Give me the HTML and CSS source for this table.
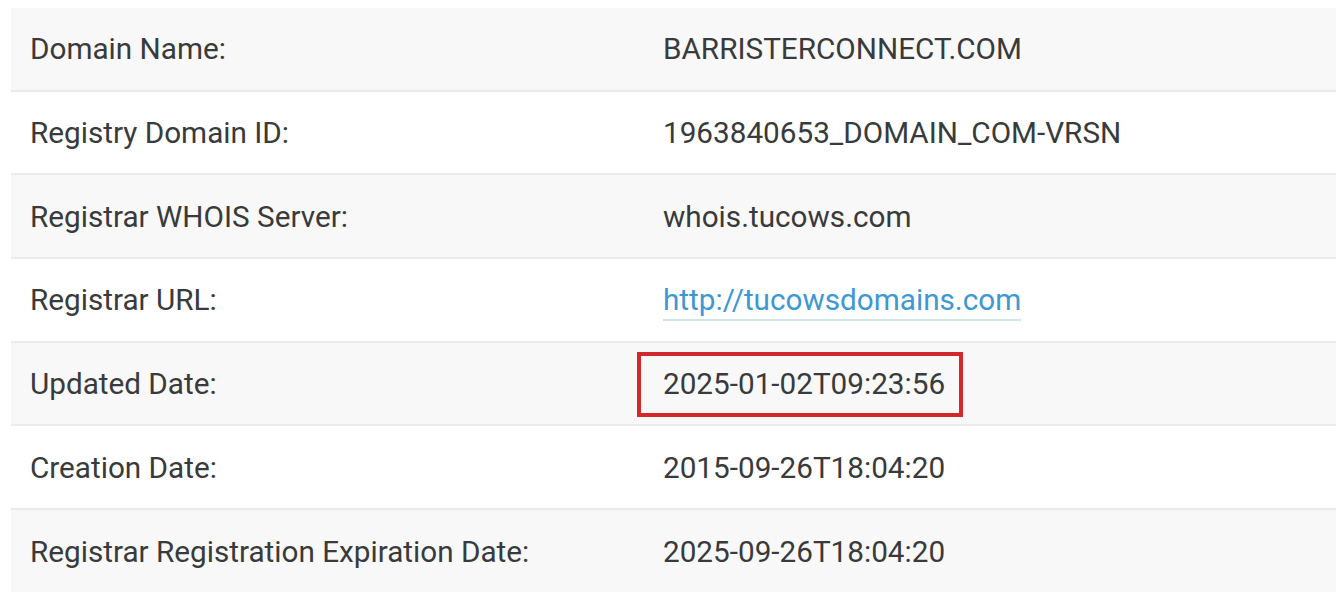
FILE: index.html
```
<!DOCTYPE html>
<html lang="en">
<head>
    <meta charset="UTF-8">
    <title>WHOIS - BARRISTERCONNECT.COM</title>
    <link rel="stylesheet" href="styles.css">
</head>
<body>

    <div class="whois">
        <div class="row">
            <div class="label">Domain Name:</div>
            <div class="value">BARRISTERCONNECT.COM</div>
        </div>
        <div class="row">
            <div class="label">Registry Domain ID:</div>
            <div class="value">1963840653_DOMAIN_COM-VRSN</div>
        </div>
        <div class="row">
            <div class="label">Registrar WHOIS Server:</div>
            <div class="value">whois.tucows.com</div>
        </div>
        <div class="row">
            <div class="label">Registrar URL:</div>
            <div class="value"><a href="#">http://tucowsdomains.com</a></div>
        </div>
        <div class="row">
            <div class="label">Updated Date:</div>
            <div class="value"><span class="marked">2025-01-02T09:23:56</span></div>
        </div>
        <div class="row">
            <div class="label">Creation Date:</div>
            <div class="value">2015-09-26T18:04:20</div>
        </div>
        <div class="row">
            <div class="label">Registrar Registration Expiration Date:</div>
            <div class="value">2025-09-26T18:04:20</div>
        </div>
    </div>

</body>
</html>
```

FILE: styles.css
```
body {
    margin: 8px 0 0 11px;
    background-color: #fff;
    font-family: Roboto, 'Liberation Sans', sans-serif;
    color: #383a3c;
}

.whois {
    display: flex;
    flex-direction: column;
}

.row {
    display: grid;
    grid-template-columns: 633px 1fr;
    align-items: center;
    height: 83.7px;
    box-sizing: border-box;
    border-bottom: 2px solid #ebebeb;
    font-size: 29.7px;
}
.row:nth-child(odd) {
    background-color: #f8f8f8;
}
.row:last-child {
    border-bottom: none;
}

.label,
.value {
    padding-left: 19px;
}

.value a {
    color: #3d98d3;
    text-decoration: none;
    border-bottom: 2px solid #cfe3f1;
    padding-bottom: 2px;
}

/* red box drawn over the updated date */
.marked {
    position: relative;
}
.marked::after {
    content: '';
    position: absolute;
    left: -26px;
    right: -18px;
    top: -14px;
    bottom: -16px;
    border: 4px solid #d3272c;
}
```
